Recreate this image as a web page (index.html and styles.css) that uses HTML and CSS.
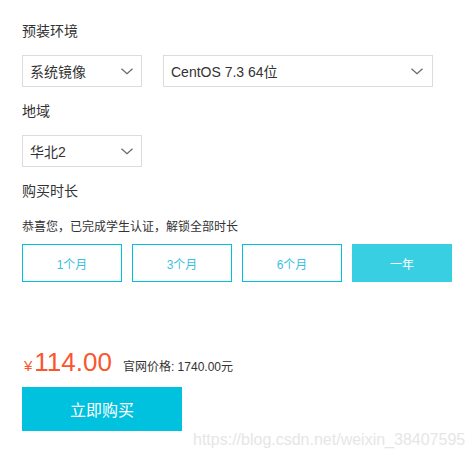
FILE: index.html
```html
<!DOCTYPE html>
<html lang="zh-CN">
<head>
<meta charset="utf-8">
<title>购买</title>
<link rel="stylesheet" href="styles.css">
</head>
<body>
<div class="page">
  <div class="label">预装环境</div>
  <div class="row">
    <div class="select select-sm">
      <span>系统镜像</span>
      <svg class="chev" width="12" height="7" viewBox="0 0 12 7"><path d="M0.5 0.8 L6 5.8 L11.5 0.8" fill="none" stroke="#666" stroke-width="1.2"/></svg>
    </div>
    <div class="select select-lg">
      <span>CentOS 7.3 64位</span>
      <svg class="chev" width="12" height="7" viewBox="0 0 12 7"><path d="M0.5 0.8 L6 5.8 L11.5 0.8" fill="none" stroke="#666" stroke-width="1.2"/></svg>
    </div>
  </div>
  <div class="label">地域</div>
  <div class="row">
    <div class="select select-sm">
      <span>华北2</span>
      <svg class="chev" width="12" height="7" viewBox="0 0 12 7"><path d="M0.5 0.8 L6 5.8 L11.5 0.8" fill="none" stroke="#666" stroke-width="1.2"/></svg>
    </div>
  </div>
  <div class="label">购买时长</div>
  <div class="note">恭喜您，已完成学生认证，解锁全部时长</div>
  <div class="periods">
    <div class="period">1个月</div>
    <div class="period">3个月</div>
    <div class="period">6个月</div>
    <div class="period active">一年</div>
  </div>
  <div class="price-row">
    <span class="yen">¥</span><span class="amount">114.00</span><span class="official">官网价格: 1740.00元</span>
  </div>
  <button class="buy">立即购买</button>
</div>
<div class="watermark">https://blog.csdn.net/weixin_38407595</div>
</body>
</html>
```
FILE: styles.css
```css
html, body {
  margin: 0;
  padding: 0;
  background: #fff;
}
body {
  font-family: "Liberation Sans", "Noto Sans CJK SC", sans-serif;
  color: #333;
  width: 474px;
  height: 456px;
  position: relative;
  overflow: hidden;
}
.page {
  padding: 21px 0 0 22px;
  display: flex;
  flex-direction: column;
  align-items: flex-start;
}
.label {
  font-size: 14px;
  line-height: 20px;
  margin-bottom: 14px;
}
.row {
  display: flex;
  gap: 21px;
  margin-bottom: 14px;
}
.select {
  box-sizing: border-box;
  height: 32px;
  border: 1px solid #dcdcdc;
  display: flex;
  align-items: center;
  justify-content: space-between;
  padding: 0 8px 0 7px;
  font-size: 14px;
  color: #333;
}
.select-sm { width: 120px; }
.select-lg { width: 270px; padding-right: 9px; }
.chev { display: block; margin-top: 1px; }
.note {
  font-size: 12px;
  line-height: 18px;
  margin-top: 3px;
  margin-bottom: 8px;
}
.periods {
  display: flex;
  gap: 10px;
}
.period {
  box-sizing: border-box;
  width: 100px;
  height: 38px;
  border: 1px solid #00c1de;
  color: #3cbfe0;
  font-size: 12px;
  display: flex;
  align-items: center;
  justify-content: center;
}
.period.active {
  background: #39cfe3;
  border-color: #39cfe3;
  color: #fff;
}
.price-row {
  margin-top: 65px;
  height: 30px;
  line-height: 30px;
  display: flex;
  align-items: baseline;
  white-space: nowrap;
}
.yen {
  color: #fb5530;
  font-size: 15px;
  margin-left: 2px;
  margin-right: 2px;
}
.amount {
  color: #fb5530;
  font-size: 26px;
}
.official {
  font-size: 12px;
  color: #333;
  margin-left: 11px;
}
.buy {
  margin-top: 10px;
  width: 160px;
  height: 44px;
  border: 0;
  background: #00c1de;
  color: #fff;
  font-family: inherit;
  font-size: 16px;
  padding: 0;
}
.watermark {
  position: absolute;
  left: 193px;
  top: 431px;
  font-size: 16px;
  line-height: 18px;
  color: #e6e6e6;
  white-space: nowrap;
}
```
